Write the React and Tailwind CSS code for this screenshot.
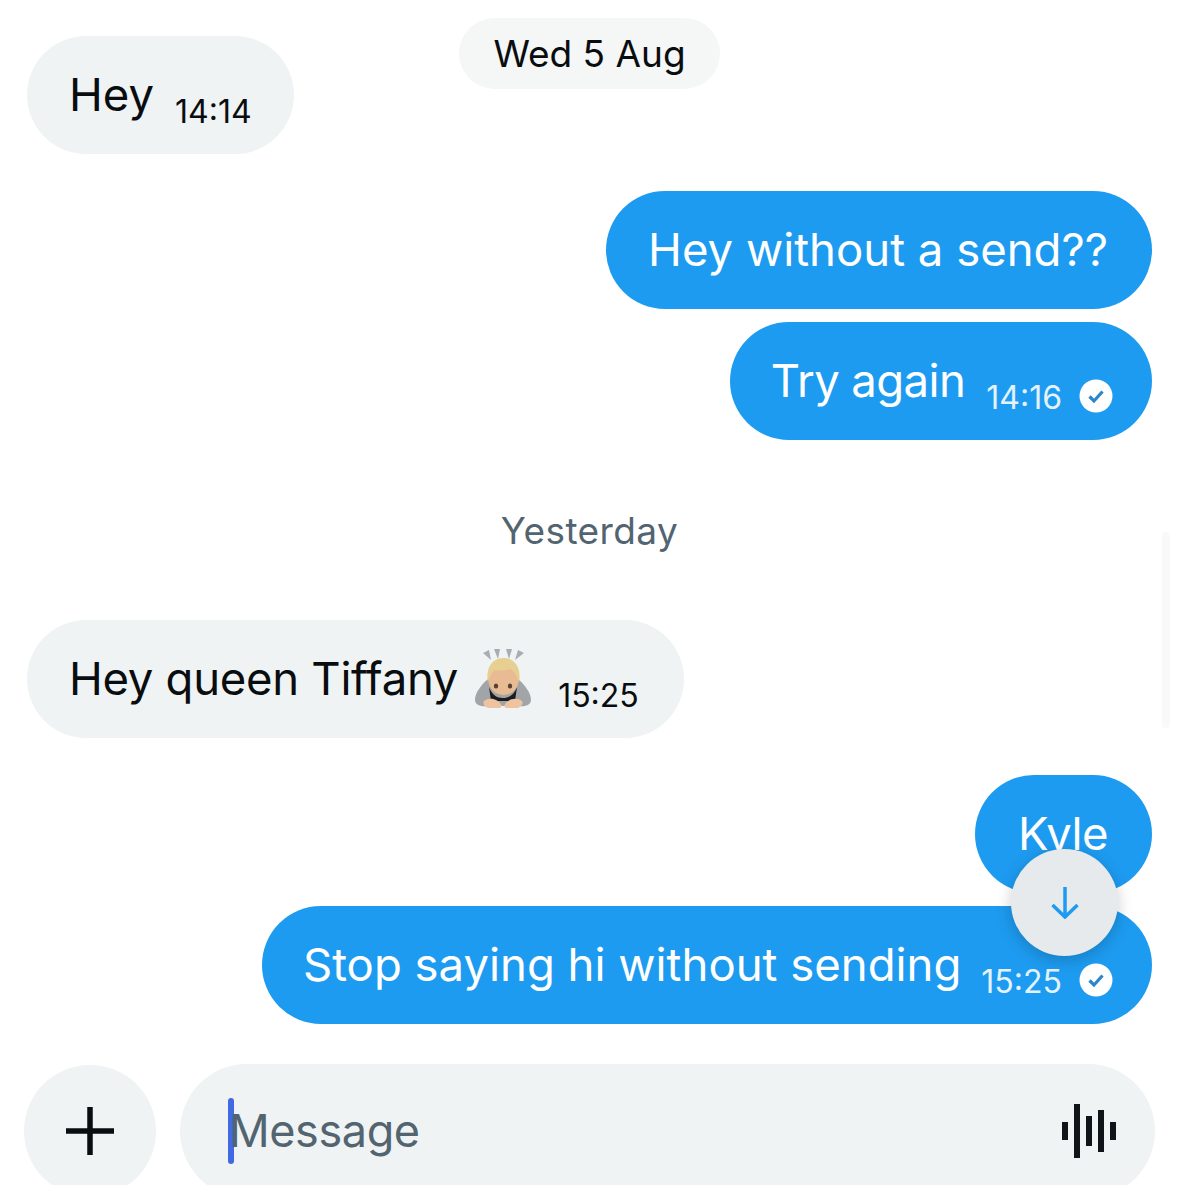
const FONT = "font-['Inter','Liberation_Sans',sans-serif]";

function Check() {
  return (
    <svg width="34" height="34" viewBox="0 0 34 34" className="ml-[17px] mt-[30px] shrink-0">
      <circle cx="17" cy="17" r="16.5" fill="#fff" />
      <path d="M10.5 17.5l4.5 4.5 8.5-9.5" fill="none" stroke="#2b86cc" strokeWidth="3.2" />
    </svg>
  );
}

function BowEmoji() {
  return (
    <svg width="56" height="62" viewBox="0 0 56 62" className="ml-[17px] mb-[2px] shrink-0">
      <g fill="#a9adb1">
        <path d="M8 6l6-3 2 10z" />
        <path d="M19 2l6 0-2 10z" />
        <path d="M31 2l6 0-3 10z" />
        <path d="M43 3l6 3-9 7z" />
      </g>
      <path d="M13 32C6 38 0 46 0 53c0 6 8 7 14 6h28c6 1 14 0 14-6 0-7-6-15-13-21z" fill="#a2a5a7" />
      <path d="M14 40c3 8 8 11 14 11s11-3 14-11l-2 14H16z" fill="#1d1d1d" />
      <ellipse cx="28.5" cy="33" rx="15" ry="15" fill="#e9bb92" />
      <path d="M13 36C10 20 18 11 28.5 11S47 20 44 36c-1-7-5-12-9-14-5 2-12 2-15 1-4 3-6 7-7 13z" fill="#e6cf90" />
      <ellipse cx="21" cy="39" rx="2.2" ry="2.6" fill="#5a4030" />
      <ellipse cx="35" cy="39" rx="2.2" ry="2.6" fill="#5a4030" />
      <path d="M9 54c5-4 14-3 18 5l-2 2H14c-3 0-7-4-5-7zM47 54c-5-4-14-3-18 5l2 2h11c3 0 7-4 5-7z" fill="#eec3a0" />
    </svg>
  );
}

function Bubble({ mine, text, time, check, emoji, textClass = "", timeClass = "ml-[21px]", className = "" }) {
  return (
    <div
      className={`h-[118px] rounded-[59px] flex items-center whitespace-nowrap ${
        mine ? "self-end bg-[#1d9bf0] text-white" : "self-start bg-[#eff3f4] text-[#0a0d10]"
      } ${className}`}
    >
      <span className={`text-[45.5px] ${textClass}`}>{text}</span>
      {emoji && <BowEmoji />}
      {time && (
        <span className={`text-[32px] mt-[33px] ${timeClass} ${mine ? "text-[#e3f2fd]" : "text-[#0a0d10]"}`}>
          {time}
        </span>
      )}
      {check && <Check />}
    </div>
  );
}

export default function App() {
  return (
    <div className={`relative w-[1179px] h-[1185px] overflow-hidden bg-white ${FONT}`}>
      <div className="flex flex-col pt-[36px] pl-[27px] pr-[27px]">
        <Bubble text="Hey" time="14:14" className="pl-[42px] pr-[42px]" />
        <Bubble mine text="Hey without a send??" className="mt-[37px] pl-[42px] pr-[44px]" />
        <Bubble
          mine
          text="Try again"
          time="14:16"
          check
          textClass="tracking-[-0.6px]"
          className="mt-[13px] pl-[41px] pr-[39px]"
        />
        <div className="mt-[69px] h-[44px] flex items-center justify-center text-[37px] tracking-[0.4px] text-[#536471]">
          Yesterday
        </div>
        <Bubble
          text="Hey queen Tiffany"
          emoji
          time="15:25"
          textClass="tracking-[-0.3px]"
          timeClass="ml-[27px]"
          className="mt-[67px] pl-[42px] pr-[45px]"
        />
        <Bubble mine text="Kyle" textClass="tracking-[-0.5px]" className="mt-[37px] pl-[43px] pr-[44px]" />
        <Bubble
          mine
          text="Stop saying hi without sending"
          time="15:25"
          check
          timeClass="ml-[20px]"
          className="mt-[13px] pl-[41px] pr-[39px]"
        />
        <div className="mt-[40px] -ml-[3px] -mr-[3px] flex gap-[24px]">
          <div className="w-[132px] h-[132px] mt-[1px] shrink-0 rounded-full bg-[#eff3f4] flex items-center justify-center">
            <svg width="48" height="48" viewBox="0 0 48 48">
              <path d="M24 0v48M0 24h48" stroke="#0a0d10" strokeWidth="5.5" fill="none" />
            </svg>
          </div>
          <div className="flex-1 h-[134px] rounded-[67px] bg-[#eff3f4] flex items-center pl-[48px] pr-[37px]">
            <div className="w-[6px] h-[66px] rounded-full bg-[#4169e1] shrink-0 -mt-[1px]" />
            <span className="text-[45px] tracking-[-0.4px] text-[#536471] -ml-[5px] flex-1">Message</span>
            <svg width="56" height="56" viewBox="0 0 56 56" className="shrink-0">
              <g fill="#0f1419">
                <rect x="0" y="19" width="6" height="18" />
                <rect x="12" y="1" width="6" height="54" />
                <rect x="24" y="13" width="6" height="30" />
                <rect x="36" y="7" width="6" height="42" />
                <rect x="48" y="19" width="6" height="18" />
              </g>
            </svg>
          </div>
        </div>
      </div>

      <div className="absolute top-[18px] left-[459px] w-[261px] h-[71px] rounded-full bg-[#f5f6f6] flex items-center justify-center text-[37px] text-[#0a0d10]">
        Wed 5 Aug
      </div>
      <div className="absolute top-[532px] left-[1162px] w-[8px] h-[196px] rounded bg-[#f9f9f9]" />
      <div className="absolute top-[849px] left-[1011px] w-[107px] h-[107px] rounded-full bg-[#e6eaec] shadow-[0_4px_16px_rgba(0,0,0,0.2)] flex items-center justify-center">
        <svg width="28" height="33" viewBox="0 0 28 33">
          <path d="M14 1v30M1.5 19L14 31 26.5 19" stroke="#1d9bf0" strokeWidth="3.5" fill="none" />
        </svg>
      </div>
    </div>
  );
}
